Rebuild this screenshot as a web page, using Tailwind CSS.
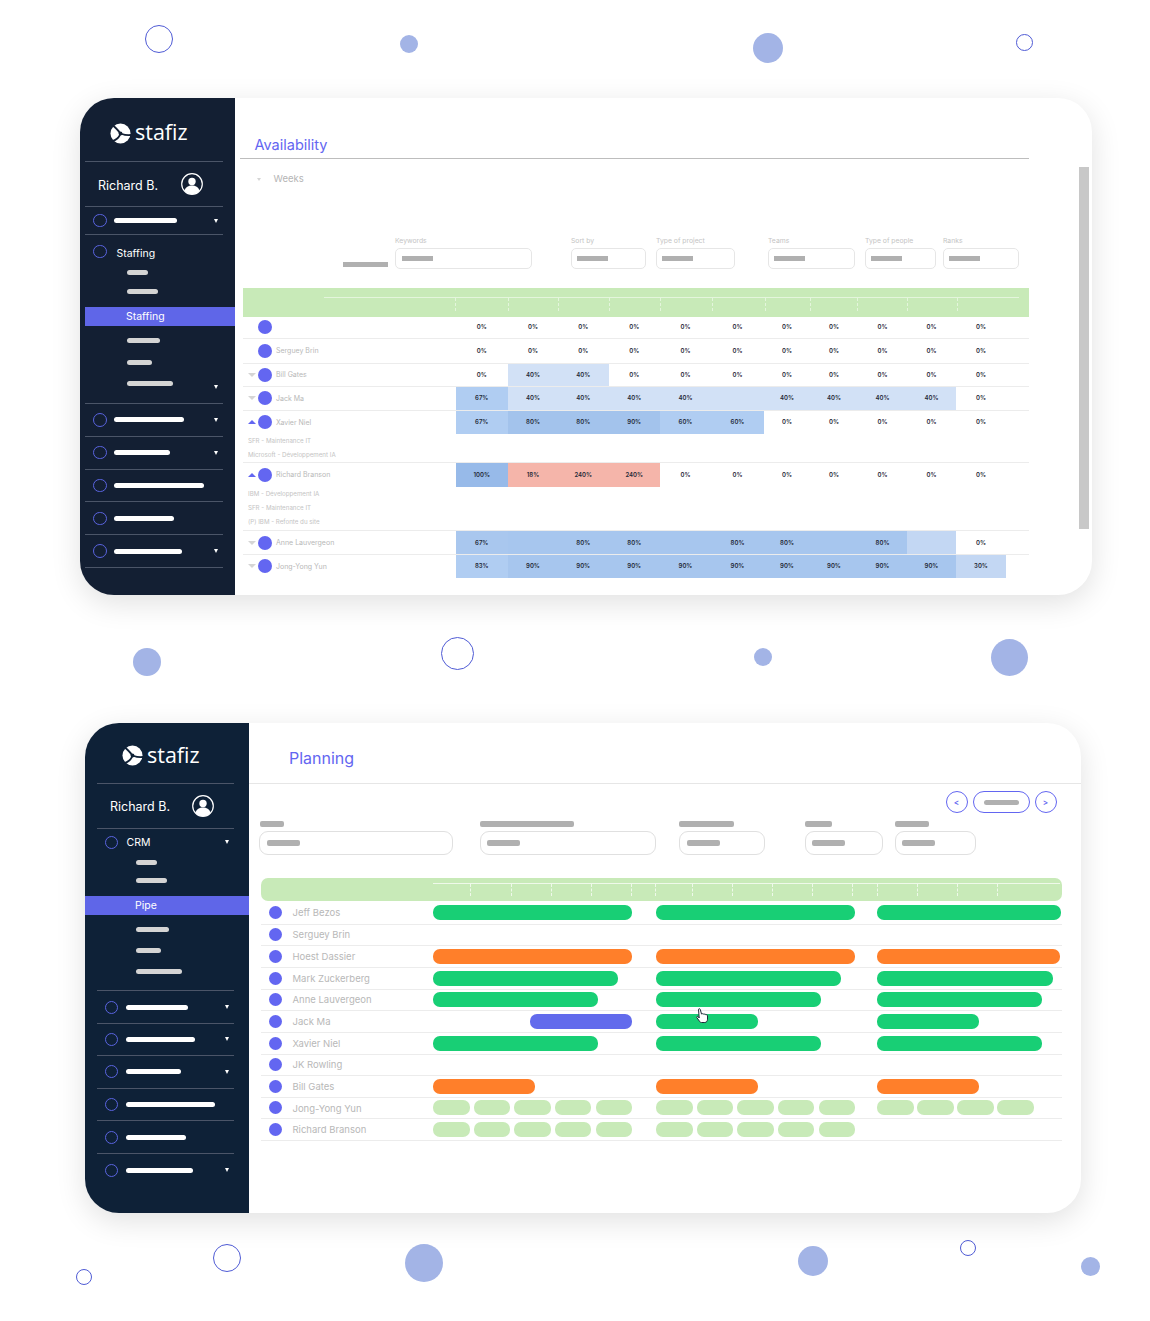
<!DOCTYPE html>
<html lang="en">
<head>
    <meta charset="UTF-8">
    <meta name="viewport" content="width=device-width, initial-scale=1.0">
    <title>Stafiz - Availability and Planning</title>
    <script src="https://cdn.jsdelivr.net/npm/@tailwindcss/browser@4"></script>
</head>
<body class="bg-white font-['Inter',sans-serif]">
<div class="relative w-[1150px] h-[1321px] overflow-hidden pt-[98px]">

    <!-- Decorative circles -->
    <div class="absolute left-[145px] top-[25px] w-[28px] h-[28px] rounded-full border border-[#4f5bd5]"></div>
    <div class="absolute left-[400px] top-[35px] w-[18px] h-[18px] rounded-full bg-[#a3b4e6]"></div>
    <div class="absolute left-[753px] top-[33px] w-[30px] h-[30px] rounded-full bg-[#a3b4e6]"></div>
    <div class="absolute left-[1016px] top-[34px] w-[17px] h-[17px] rounded-full border border-[#4f5bd5]"></div>
    <div class="absolute left-[133px] top-[648px] w-[28px] h-[28px] rounded-full bg-[#a3b4e6]"></div>
    <div class="absolute left-[441px] top-[637px] w-[33px] h-[33px] rounded-full border border-[#4f5bd5]"></div>
    <div class="absolute left-[754px] top-[648px] w-[18px] h-[18px] rounded-full bg-[#a3b4e6]"></div>
    <div class="absolute left-[991px] top-[639px] w-[37px] h-[37px] rounded-full bg-[#a3b4e6]"></div>
    <div class="absolute left-[213px] top-[1244px] w-[28px] h-[28px] rounded-full border border-[#4f5bd5]"></div>
    <div class="absolute left-[405px] top-[1244px] w-[38px] h-[38px] rounded-full bg-[#a3b4e6]"></div>
    <div class="absolute left-[798px] top-[1246px] w-[30px] h-[30px] rounded-full bg-[#a3b4e6]"></div>
    <div class="absolute left-[960px] top-[1240px] w-[16px] h-[16px] rounded-full border border-[#4f5bd5]"></div>
    <div class="absolute left-[76px] top-[1269px] w-[16px] h-[16px] rounded-full border border-[#4f5bd5]"></div>
    <div class="absolute left-[1081px] top-[1257px] w-[19px] h-[19px] rounded-full bg-[#a3b4e6]"></div>

    <!-- Availability card -->
    <div class="relative ml-[80px] w-[1012px] h-[497px] flex rounded-[34px] overflow-hidden bg-white shadow-[0_8px_30px_rgba(0,0,0,0.12)]">
        <aside class="w-[155px] shrink-0 pl-[5px] bg-[#131f33]">
            <div class="w-[138px] h-[64px] pl-[25px] pt-[24px] flex items-start gap-[4px] border-b border-[#4b5568]">
                <svg class="mt-[1px]" width="21" height="21" viewBox="0 0 22 22"><circle cx="11" cy="11" r="10.500" fill="#fff"/><g fill="none" stroke="#131f33" stroke-width="1.900"><path d="M3 2.500C6 5 8.500 7 10 10"/><path d="M22.500 12.500C18 13 15 12.500 12.500 11.500"/><path d="M2.500 19C6 18 9 15.500 10.500 12.500"/></g><circle cx="11" cy="11" r="2" fill="#131f33"/></svg>
                <span class="font-['Open_Sans',sans-serif] text-[21.500px] leading-[20px] text-white">stafiz</span>
            </div>
            <div class="w-[138px] h-[45px] pl-[13px] pr-[20px] flex items-center justify-between border-b border-[#4b5568]">
                <span class="mt-[4px] text-[12.500px] text-white">Richard B.</span>
                <svg class="mt-[-1px]" width="22" height="22" viewBox="0 0 22 22"><circle cx="11" cy="11" r="10.300" fill="none" stroke="#fff" stroke-width="1.200"/><circle cx="11" cy="8.500" r="3.700" fill="#fff"/><path d="M3.500 17.700c1-3.700 4-5.200 7.500-5.200s6.500 1.500 7.500 5.200a10 10 0 0 1-15 0z" fill="#fff"/></svg>
            </div>
            <div class="w-[138px] h-[28px] pl-[8px] flex items-center border-b border-[#4b5568]">
                <span class="w-[13.500px] h-[13.500px] rounded-full border-[1.500px] border-[#5a64e0]"></span>
                <span class="ml-[7.500px] w-[63px] h-[5px] rounded-full bg-white"></span>
                <span class="ml-auto mr-[5px] w-0 h-0 border-x-[2.500px] border-x-transparent border-t-[4px] border-t-white"></span>
            </div>
            <div class="w-[138px] h-[72px] pl-[8px] pt-[10px]">
                <div class="flex items-center h-[13px]">
                    <span class="w-[13.500px] h-[13.500px] rounded-full border-[1.500px] border-[#5a64e0]"></span>
                    <span class="ml-[10px] mt-[4px] text-[10.500px] text-white">Staffing</span>
                </div>
                <div class="mt-[11.500px] ml-[33.500px] w-[21px] h-[5px] rounded-full bg-[#d4d4d4]"></div>
                <div class="mt-[14px] ml-[33.500px] w-[31px] h-[5px] rounded-full bg-[#d4d4d4]"></div>
            </div>
            <div class="w-[150px] h-[19px] pl-[41px] flex items-center bg-[#5f66e8] text-[10.500px] text-white">Staffing</div>
            <div class="w-[138px] h-[78px] pl-[41.500px] pt-[11.500px] border-b border-[#4b5568]">
                <div class="w-[33px] h-[5px] rounded-full bg-[#d4d4d4]"></div>
                <div class="mt-[17px] w-[25px] h-[5px] rounded-full bg-[#d4d4d4]"></div>
                <div class="mt-[16px] flex items-start justify-between">
                    <span class="w-[46px] h-[5px] rounded-full bg-[#d4d4d4]"></span>
                    <span class="mr-[5px] mt-[4.500px] w-0 h-0 border-x-[2.500px] border-x-transparent border-t-[4px] border-t-white"></span>
                </div>
            </div>
            <div class="w-[138px] h-[32.800px] pl-[8px] flex items-center border-b border-[#4b5568]">
                <span class="w-[13.500px] h-[13.500px] rounded-full border-[1.500px] border-[#5a64e0]"></span>
                <span class="ml-[7.500px] w-[70px] h-[5px] rounded-full bg-white"></span>
                <span class="ml-auto mr-[5px] w-0 h-0 border-x-[2.500px] border-x-transparent border-t-[4px] border-t-white"></span>
            </div>
            <div class="w-[138px] h-[32.800px] pl-[8px] flex items-center border-b border-[#4b5568]">
                <span class="w-[13.500px] h-[13.500px] rounded-full border-[1.500px] border-[#5a64e0]"></span>
                <span class="ml-[7.500px] w-[56px] h-[5px] rounded-full bg-white"></span>
                <span class="ml-auto mr-[5px] w-0 h-0 border-x-[2.500px] border-x-transparent border-t-[4px] border-t-white"></span>
            </div>
            <div class="w-[138px] h-[32.800px] pl-[8px] flex items-center border-b border-[#4b5568]">
                <span class="w-[13.500px] h-[13.500px] rounded-full border-[1.500px] border-[#5a64e0]"></span>
                <span class="ml-[7.500px] w-[89.500px] h-[5px] rounded-full bg-white"></span>
            </div>
            <div class="w-[138px] h-[32.800px] pl-[8px] flex items-center border-b border-[#4b5568]">
                <span class="w-[13.500px] h-[13.500px] rounded-full border-[1.500px] border-[#5a64e0]"></span>
                <span class="ml-[7.500px] w-[60px] h-[5px] rounded-full bg-white"></span>
            </div>
            <div class="w-[138px] h-[32.800px] pl-[8px] flex items-center border-b border-[#4b5568]">
                <span class="w-[13.500px] h-[13.500px] rounded-full border-[1.500px] border-[#5a64e0]"></span>
                <span class="ml-[7.500px] w-[67.500px] h-[5px] rounded-full bg-white"></span>
                <span class="ml-auto mr-[5px] w-0 h-0 border-x-[2.500px] border-x-transparent border-t-[4px] border-t-white"></span>
            </div>
        </aside>

        <main class="relative flex-1">
            <div class="absolute right-[3px] top-[69px] w-[10px] h-[362px] bg-[#c8c8c8]"></div>
            <div class="ml-[5px] w-[789px] h-[61px] pl-[14.500px] pb-[4px] flex items-end border-b border-[#bdbdbd]">
                <h2 class="text-[14.500px] leading-[18px] text-[#6366f1]">Availability</h2>
            </div>
            <div class="mt-[14px] h-[12px] pl-[22px] flex items-center">
                <span class="w-0 h-0 border-x-[2.500px] border-x-transparent border-t-[3px] border-t-[#d5d5d5]"></span>
                <span class="ml-[12.500px] text-[9.500px] text-[#b5b5b5]">Weeks</span>
            </div>

            <!-- Filters -->
            <div class="mt-[49px] ml-[108px] flex items-end text-[6.800px] leading-[14px] text-[#c4c4c4]">
                <div class="mb-[2.500px] w-[45px] h-[5px] bg-[#b0b0b0]"></div>
                <div class="ml-[7px] w-[137px]">Keywords<div class="h-[21px] pl-[6px] flex items-center rounded-[5px] border border-[#e6e6e6]"><span class="w-[31px] h-[5px] bg-[#b0b0b0]"></span></div></div>
                <div class="ml-[39px] w-[75px]">Sort by<div class="h-[21px] pl-[5px] flex items-center rounded-[5px] border border-[#e6e6e6]"><span class="w-[31px] h-[5px] bg-[#b0b0b0]"></span></div></div>
                <div class="ml-[10px] w-[79px]">Type of project<div class="h-[21px] pl-[5px] flex items-center rounded-[5px] border border-[#e6e6e6]"><span class="w-[31px] h-[5px] bg-[#b0b0b0]"></span></div></div>
                <div class="ml-[33px] w-[87px]">Teams<div class="h-[21px] pl-[5px] flex items-center rounded-[5px] border border-[#e6e6e6]"><span class="w-[31px] h-[5px] bg-[#b0b0b0]"></span></div></div>
                <div class="ml-[10px] w-[70.500px]">Type of people<div class="h-[21px] pl-[5px] flex items-center rounded-[5px] border border-[#e6e6e6]"><span class="w-[31px] h-[5px] bg-[#b0b0b0]"></span></div></div>
                <div class="ml-[7.500px] w-[76px]">Ranks<div class="h-[21px] pl-[5px] flex items-center rounded-[5px] border border-[#e6e6e6]"><span class="w-[31px] h-[5px] bg-[#b0b0b0]"></span></div></div>
            </div>

            <!-- Availability table -->
            <div class="mt-[19px] ml-[8px] w-[786px] h-[29px] pl-[81px] pt-[9px] bg-[#c8eab8]">
                <div class="w-[695px] border-t border-white/50"></div>
                <div class="ml-[131px] flex h-[13px] *:border-l *:border-dashed *:border-white/50">
                    <div class="w-[53px]"></div><div class="w-[50px]"></div><div class="w-[50.500px]"></div><div class="w-[51px]"></div><div class="w-[52px]"></div><div class="w-[53px]"></div><div class="w-[45.500px]"></div><div class="w-[47px]"></div><div class="w-[50px]"></div><div class="w-[49.500px]"></div><div class="w-[1px]"></div>
                </div>
            </div>
            <table class="ml-[8px] w-[786px] table-fixed border-collapse text-center text-[6px] leading-none font-semibold text-[#1f2937]">
                <colgroup>
                    <col class="w-[212.500px]"><col class="w-[52.500px]"><col class="w-[50px]"><col class="w-[50.500px]"><col class="w-[51.500px]"><col class="w-[51px]"><col class="w-[53px]"><col class="w-[46px]"><col class="w-[48px]"><col class="w-[49px]"><col class="w-[49px]"><col class="w-[50px]"><col class="w-[23px]">
                </colgroup>
                <tbody>
                    <tr class="h-[21px] border-b border-[#ececec]">
                        <td class="pl-[15px]"><span class="block w-[14px] h-[14px] rounded-full bg-[#6366f1]"></span></td>
                        <td>0%</td><td>0%</td><td>0%</td><td>0%</td><td>0%</td><td>0%</td><td>0%</td><td>0%</td><td>0%</td><td>0%</td><td>0%</td><td></td>
                    </tr>
                    <tr class="h-[25px] border-b border-[#ececec]">
                        <td class="pl-[15px]"><div class="flex items-center text-left text-[7px] font-normal text-[#b8b8b8]"><span class="w-[14px] h-[14px] rounded-full bg-[#6366f1]"></span><span class="ml-[4px]">Serguey Brin</span></div></td>
                        <td>0%</td><td>0%</td><td>0%</td><td>0%</td><td>0%</td><td>0%</td><td>0%</td><td>0%</td><td>0%</td><td>0%</td><td>0%</td><td></td>
                    </tr>
                    <tr class="h-[23px] border-b border-[#ececec]">
                        <td class="pl-[5px]"><div class="flex items-center text-left text-[7px] font-normal text-[#b8b8b8]"><span class="w-0 h-0 border-x-[4px] border-x-transparent border-t-[4px] border-t-[#d5d5d5]"></span><span class="ml-[2px] w-[14px] h-[14px] rounded-full bg-[#6366f1]"></span><span class="ml-[4px]">Bill Gates</span></div></td>
                        <td>0%</td><td class="bg-[#d2e1f6]">40%</td><td class="bg-[#d2e1f6]">40%</td><td>0%</td><td>0%</td><td>0%</td><td>0%</td><td>0%</td><td>0%</td><td>0%</td><td>0%</td><td></td>
                    </tr>
                    <tr class="h-[24px] border-b border-[#ececec]">
                        <td class="pl-[5px]"><div class="flex items-center text-left text-[7px] font-normal text-[#b8b8b8]"><span class="w-0 h-0 border-x-[4px] border-x-transparent border-t-[4px] border-t-[#d5d5d5]"></span><span class="ml-[2px] w-[14px] h-[14px] rounded-full bg-[#6366f1]"></span><span class="ml-[4px]">Jack Ma</span></div></td>
                        <td class="bg-[#b0cdf2]">67%</td><td class="bg-[#d2e1f6]">40%</td><td class="bg-[#d2e1f6]">40%</td><td class="bg-[#d2e1f6]">40%</td><td class="bg-[#d2e1f6]">40%</td><td class="bg-[#d2e1f6]"></td><td class="bg-[#d2e1f6]">40%</td><td class="bg-[#d2e1f6]">40%</td><td class="bg-[#d2e1f6]">40%</td><td class="bg-[#d2e1f6]">40%</td><td>0%</td><td></td>
                    </tr>
                    <tr class="h-[24px]">
                        <td class="pl-[5px]"><div class="flex items-center text-left text-[7px] font-normal text-[#b8b8b8]"><span class="w-0 h-0 border-x-[4px] border-x-transparent border-b-[4px] border-b-[#6366f1]"></span><span class="ml-[2px] w-[14px] h-[14px] rounded-full bg-[#6366f1]"></span><span class="ml-[4px]">Xavier Niel</span></div></td>
                        <td class="bg-[#b0cdf2]">67%</td><td class="bg-[#a3c3ec]">80%</td><td class="bg-[#a3c3ec]">80%</td><td class="bg-[#a3c3ec]">90%</td><td class="bg-[#b0cdf2]">60%</td><td class="bg-[#b0cdf2]">60%</td><td>0%</td><td>0%</td><td>0%</td><td>0%</td><td>0%</td><td></td>
                    </tr>
                    <tr class="h-[28px] border-b border-[#ececec]">
                        <td colspan="13" class="pl-[5px] text-left text-[6.200px] leading-[14px] font-normal text-[#c4c4c4]">SFR - Maintenance IT<br>Microsoft - Développement IA</td>
                    </tr>
                    <tr class="h-[24px]">
                        <td class="pl-[5px]"><div class="flex items-center text-left text-[7px] font-normal text-[#b8b8b8]"><span class="w-0 h-0 border-x-[4px] border-x-transparent border-b-[4px] border-b-[#6366f1]"></span><span class="ml-[2px] w-[14px] h-[14px] rounded-full bg-[#6366f1]"></span><span class="ml-[4px]">Richard Branson</span></div></td>
                        <td class="bg-[#97bae9]">100%</td><td class="bg-[#f5b5aa]">18%</td><td class="bg-[#f5b5aa]">240%</td><td class="bg-[#f5b5aa]">240%</td><td>0%</td><td>0%</td><td>0%</td><td>0%</td><td>0%</td><td>0%</td><td>0%</td><td></td>
                    </tr>
                    <tr class="h-[44px] border-b border-[#ececec]">
                        <td colspan="13" class="pl-[5px] text-left text-[6.200px] leading-[14px] font-normal text-[#c4c4c4]">IBM - Développement IA<br>SFR - Maintenance IT<br>(P) IBM - Refonte du site</td>
                    </tr>
                    <tr class="h-[24px] border-b border-[#ececec]">
                        <td class="pl-[5px]"><div class="flex items-center text-left text-[7px] font-normal text-[#b8b8b8]"><span class="w-0 h-0 border-x-[4px] border-x-transparent border-t-[4px] border-t-[#d5d5d5]"></span><span class="ml-[2px] w-[14px] h-[14px] rounded-full bg-[#6366f1]"></span><span class="ml-[4px]">Anne Lauvergeon</span></div></td>
                        <td class="bg-[#a9c7ee]">67%</td><td class="bg-[#a7c6ee]"></td><td class="bg-[#a7c6ee]">80%</td><td class="bg-[#a7c6ee]">80%</td><td class="bg-[#a7c6ee]"></td><td class="bg-[#a7c6ee]">80%</td><td class="bg-[#a7c6ee]">80%</td><td class="bg-[#a7c6ee]"></td><td class="bg-[#a7c6ee]">80%</td><td class="bg-[#c3d7f3]"></td><td>0%</td><td></td>
                    </tr>
                    <tr class="h-[23px]">
                        <td class="pl-[5px]"><div class="flex items-center text-left text-[7px] font-normal text-[#b8b8b8]"><span class="w-0 h-0 border-x-[4px] border-x-transparent border-t-[4px] border-t-[#d5d5d5]"></span><span class="ml-[2px] w-[14px] h-[14px] rounded-full bg-[#6366f1]"></span><span class="ml-[4px]">Jong-Yong Yun</span></div></td>
                        <td class="bg-[#b0cdf2]">83%</td><td class="bg-[#a7c6ee]">90%</td><td class="bg-[#a7c6ee]">90%</td><td class="bg-[#a7c6ee]">90%</td><td class="bg-[#a7c6ee]">90%</td><td class="bg-[#a7c6ee]">90%</td><td class="bg-[#a7c6ee]">90%</td><td class="bg-[#a7c6ee]">90%</td><td class="bg-[#a7c6ee]">90%</td><td class="bg-[#a7c6ee]">90%</td><td class="bg-[#c3d7f3]">30%</td><td></td>
                    </tr>
                </tbody>
            </table>
        </main>
    </div>

    <!-- Planning card -->
    <div class="relative mt-[128px] ml-[85px] w-[996px] h-[490px] flex rounded-[34px] overflow-hidden bg-white shadow-[0_8px_30px_rgba(0,0,0,0.12)]">
        <aside class="w-[164px] shrink-0 pl-[12px] bg-[#0e2137]">
            <div class="w-[137px] h-[61px] pl-[25px] pt-[22px] flex items-start gap-[4px] border-b border-[#4b5568]">
                <svg width="21" height="21" viewBox="0 0 22 22"><circle cx="11" cy="11" r="10.500" fill="#fff"/><g fill="none" stroke="#0e2137" stroke-width="1.900"><path d="M3 2.500C6 5 8.500 7 10 10"/><path d="M22.500 12.500C18 13 15 12.500 12.500 11.500"/><path d="M2.500 19C6 18 9 15.500 10.500 12.500"/></g><circle cx="11" cy="11" r="2" fill="#0e2137"/></svg>
                <span class="font-['Open_Sans',sans-serif] text-[21.500px] leading-[20px] text-white">stafiz</span>
            </div>
            <div class="w-[137px] h-[45px] pl-[13px] pr-[20px] flex items-center justify-between border-b border-[#4b5568]">
                <span class="mt-[3px] text-[12.500px] text-white">Richard B.</span>
                <svg class="-mt-[1px]" width="22" height="22" viewBox="0 0 22 22"><circle cx="11" cy="11" r="10.300" fill="none" stroke="#fff" stroke-width="1.200"/><circle cx="11" cy="8.500" r="3.700" fill="#fff"/><path d="M3.500 17.700c1-3.700 4-5.200 7.500-5.200s6.500 1.500 7.500 5.200a10 10 0 0 1-15 0z" fill="#fff"/></svg>
            </div>
            <div class="w-[137px] h-[67px] pl-[8px] pt-[6.500px]">
                <div class="flex items-center h-[13px]">
                    <span class="w-[13px] h-[13px] rounded-full border-[1.500px] border-[#5a64e0]"></span>
                    <span class="ml-[8.500px] mt-[1px] text-[10.500px] text-white">CRM</span>
                    <span class="ml-auto mr-[5px] w-0 h-0 border-x-[2.500px] border-x-transparent border-t-[4px] border-t-white"></span>
                </div>
                <div class="mt-[11px] ml-[30.500px] w-[21.500px] h-[5px] rounded-full bg-[#d4d4d4]"></div>
                <div class="mt-[13.500px] ml-[30.500px] w-[31.500px] h-[5px] rounded-full bg-[#d4d4d4]"></div>
            </div>
            <div class="-ml-[12px] w-[164px] h-[18.500px] pl-[50px] pt-[1px] flex items-center bg-[#5f66e8] text-[10.500px] text-white">Pipe</div>
            <div class="w-[137px] h-[76.500px] pl-[38.500px] pt-[12px] border-b border-[#4b5568]">
                <div class="w-[33.500px] h-[5px] rounded-full bg-[#d4d4d4]"></div>
                <div class="mt-[16px] w-[25.500px] h-[5px] rounded-full bg-[#d4d4d4]"></div>
                <div class="mt-[16.500px] w-[46.500px] h-[5px] rounded-full bg-[#d4d4d4]"></div>
            </div>
            <div class="w-[137px] h-[32.600px] pl-[8px] pt-[1px] flex items-center border-b border-[#4b5568]">
                <span class="w-[13px] h-[13px] rounded-full border-[1.500px] border-[#5a64e0]"></span>
                <span class="ml-[8px] w-[62px] h-[5px] rounded-full bg-white"></span>
                <span class="ml-auto mr-[5px] w-0 h-0 border-x-[2.500px] border-x-transparent border-t-[4px] border-t-white"></span>
            </div>
            <div class="w-[137px] h-[32.600px] pl-[8px] flex items-center border-b border-[#4b5568]">
                <span class="w-[13px] h-[13px] rounded-full border-[1.500px] border-[#5a64e0]"></span>
                <span class="ml-[8px] w-[69px] h-[5px] rounded-full bg-white"></span>
                <span class="ml-auto mr-[5px] w-0 h-0 border-x-[2.500px] border-x-transparent border-t-[4px] border-t-white"></span>
            </div>
            <div class="w-[137px] h-[32.600px] pl-[8px] flex items-center border-b border-[#4b5568]">
                <span class="w-[13px] h-[13px] rounded-full border-[1.500px] border-[#5a64e0]"></span>
                <span class="ml-[8px] w-[55px] h-[5px] rounded-full bg-white"></span>
                <span class="ml-auto mr-[5px] w-0 h-0 border-x-[2.500px] border-x-transparent border-t-[4px] border-t-white"></span>
            </div>
            <div class="w-[137px] h-[32.600px] pl-[8px] flex items-center border-b border-[#4b5568]">
                <span class="w-[13px] h-[13px] rounded-full border-[1.500px] border-[#5a64e0]"></span>
                <span class="ml-[8px] w-[89px] h-[5px] rounded-full bg-white"></span>
            </div>
            <div class="w-[137px] h-[32.600px] pl-[8px] flex items-center border-b border-[#4b5568]">
                <span class="w-[13px] h-[13px] rounded-full border-[1.500px] border-[#5a64e0]"></span>
                <span class="ml-[8px] w-[60px] h-[5px] rounded-full bg-white"></span>
            </div>
            <div class="w-[137px] h-[32.600px] pl-[8px] flex items-center">
                <span class="w-[13px] h-[13px] rounded-full border-[1.500px] border-[#5a64e0]"></span>
                <span class="ml-[8px] w-[67px] h-[5px] rounded-full bg-white"></span>
                <span class="ml-auto mr-[5px] w-0 h-0 border-x-[2.500px] border-x-transparent border-t-[4px] border-t-white"></span>
            </div>
        </aside>

        <main class="flex-1">
            <div class="h-[61px] pl-[40px] pt-[10px] flex items-center border-b border-[#e6e6e6]">
                <h2 class="text-[16px] text-[#6366f1]">Planning</h2>
            </div>
            <div class="pt-[7px] pr-[24.500px] flex justify-end items-center gap-[5px]">
                <button class="w-[22px] h-[22px] flex items-center justify-center rounded-full border border-[#6366f1] text-[8px] leading-none font-semibold text-[#6366f1]">&lt;</button>
                <button class="w-[57px] h-[22px] flex items-center justify-center rounded-full border border-[#6366f1]"><span class="w-[35px] h-[5px] rounded-full bg-[#b0b0b0]"></span></button>
                <button class="w-[22px] h-[22px] flex items-center justify-center rounded-full border border-[#6366f1] text-[8px] leading-none font-semibold text-[#6366f1]">&gt;</button>
            </div>

            <!-- Filters -->
            <div class="mt-[8px] ml-[10px] flex">
                <div class="w-[194px]"><div class="ml-[1px] w-[24px] h-[6px] rounded-[2px] bg-[#b0b0b0]"></div><div class="mt-[3.500px] h-[24px] pl-[7px] flex items-center rounded-[9px] border border-[#e0e0e0]"><span class="w-[33px] h-[6px] rounded-[2px] bg-[#b0b0b0]"></span></div></div>
                <div class="ml-[26.500px] w-[176px]"><div class="w-[94px] h-[6px] rounded-[2px] bg-[#b0b0b0]"></div><div class="mt-[3.500px] h-[24px] pl-[6.500px] flex items-center rounded-[9px] border border-[#e0e0e0]"><span class="w-[33px] h-[6px] rounded-[2px] bg-[#b0b0b0]"></span></div></div>
                <div class="ml-[23.500px] w-[86px]"><div class="w-[55px] h-[6px] rounded-[2px] bg-[#b0b0b0]"></div><div class="mt-[3.500px] h-[24px] pl-[6.500px] flex items-center rounded-[9px] border border-[#e0e0e0]"><span class="w-[33px] h-[6px] rounded-[2px] bg-[#b0b0b0]"></span></div></div>
                <div class="ml-[39.500px] w-[78.500px]"><div class="w-[27px] h-[6px] rounded-[2px] bg-[#b0b0b0]"></div><div class="mt-[3.500px] h-[24px] pl-[6px] flex items-center rounded-[9px] border border-[#e0e0e0]"><span class="w-[33px] h-[6px] rounded-[2px] bg-[#b0b0b0]"></span></div></div>
                <div class="ml-[12px] w-[81px]"><div class="w-[34px] h-[6px] rounded-[2px] bg-[#b0b0b0]"></div><div class="mt-[3.500px] h-[24px] pl-[6px] flex items-center rounded-[9px] border border-[#e0e0e0]"><span class="w-[33px] h-[6px] rounded-[2px] bg-[#b0b0b0]"></span></div></div>
            </div>

            <!-- Planning table -->
            <div class="mt-[23px] ml-[12px] w-[801px] h-[23px] pl-[172px] pt-[5px] rounded-[7px] bg-[#c8eab8]">
                <div class="w-[627px] border-t border-white/70"></div>
                <div class="flex h-[12px] *:border-l *:border-dashed *:border-white/70">
                    <div class="ml-[37px] w-[40.500px]"></div><div class="w-[40.500px]"></div><div class="w-[40px]"></div><div class="w-[40px]"></div><div class="w-[24px]"></div><div class="w-[36.500px]"></div><div class="w-[40px]"></div><div class="w-[40px]"></div><div class="w-[40px]"></div><div class="w-[40.500px]"></div><div class="w-[24.500px]"></div><div class="w-[40px]"></div><div class="w-[40px]"></div><div class="w-[40px]"></div><div class="w-[40px]"></div>
                </div>
            </div>
            <div class="ml-[12px] w-[801px] text-[9.500px] text-[#b8b8b8]">
                <div class="h-[24px] grid grid-cols-[172px_223px_221px_184px] items-center border-b border-[#ececec]">
                    <div class="pl-[8px] flex items-center"><span class="w-[13px] h-[13px] rounded-full bg-[#6366f1]"></span><span class="ml-[10.500px] mt-[2px]">Jeff Bezos</span></div>
                    <div class="w-[199px] h-[15px] rounded-[7px] bg-[#18cf75]"></div>
                    <div class="w-[199px] h-[15px] rounded-[7px] bg-[#18cf75]"></div>
                    <div class="w-[184px] h-[15px] rounded-[7px] bg-[#18cf75]"></div>
                </div>
                <div class="h-[21px] grid grid-cols-[172px_223px_221px_184px] items-center border-b border-[#ececec]">
                    <div class="pl-[8px] flex items-center"><span class="w-[13px] h-[13px] rounded-full bg-[#6366f1]"></span><span class="ml-[10.500px] mt-[2px]">Serguey Brin</span></div>
                </div>
                <div class="h-[22px] grid grid-cols-[172px_223px_221px_184px] items-center border-b border-[#ececec]">
                    <div class="pl-[8px] flex items-center"><span class="w-[13px] h-[13px] rounded-full bg-[#6366f1]"></span><span class="ml-[10.500px] mt-[2px]">Hoest Dassier</span></div>
                    <div class="w-[199px] h-[15px] rounded-[7px] bg-[#ff7f2a]"></div>
                    <div class="w-[199px] h-[15px] rounded-[7px] bg-[#ff7f2a]"></div>
                    <div class="w-[183px] h-[15px] rounded-[7px] bg-[#ff7f2a]"></div>
                </div>
                <div class="h-[22px] grid grid-cols-[172px_223px_221px_184px] items-center border-b border-[#ececec]">
                    <div class="pl-[8px] flex items-center"><span class="w-[13px] h-[13px] rounded-full bg-[#6366f1]"></span><span class="ml-[10.500px] mt-[2px]">Mark Zuckerberg</span></div>
                    <div class="w-[185px] h-[15px] rounded-[7px] bg-[#18cf75]"></div>
                    <div class="w-[185px] h-[15px] rounded-[7px] bg-[#18cf75]"></div>
                    <div class="w-[176px] h-[15px] rounded-[7px] bg-[#18cf75]"></div>
                </div>
                <div class="h-[21px] grid grid-cols-[172px_223px_221px_184px] items-center border-b border-[#ececec]">
                    <div class="pl-[8px] flex items-center"><span class="w-[13px] h-[13px] rounded-full bg-[#6366f1]"></span><span class="ml-[10.500px] mt-[2px]">Anne Lauvergeon</span></div>
                    <div class="w-[165px] h-[15px] rounded-[7px] bg-[#18cf75]"></div>
                    <div class="w-[165px] h-[15px] rounded-[7px] bg-[#18cf75]"></div>
                    <div class="w-[165px] h-[15px] rounded-[7px] bg-[#18cf75]"></div>
                </div>
                <div class="h-[22px] grid grid-cols-[172px_223px_221px_184px] items-center border-b border-[#ececec]">
                    <div class="pl-[8px] flex items-center"><span class="w-[13px] h-[13px] rounded-full bg-[#6366f1]"></span><span class="ml-[10.500px] mt-[2px]">Jack Ma</span></div>
                    <div class="ml-[97px] w-[102px] h-[15px] rounded-[7px] bg-[#626bec]"></div>
                    <div class="w-[102px] h-[15px] rounded-[7px] bg-[#18cf75]"></div>
                    <div class="w-[102px] h-[15px] rounded-[7px] bg-[#18cf75]"></div>
                </div>
                <div class="h-[22px] grid grid-cols-[172px_223px_221px_184px] items-center border-b border-[#ececec]">
                    <div class="pl-[8px] flex items-center"><span class="w-[13px] h-[13px] rounded-full bg-[#6366f1]"></span><span class="ml-[10.500px] mt-[2px]">Xavier Niel</span></div>
                    <div class="w-[165px] h-[15px] rounded-[7px] bg-[#18cf75]"></div>
                    <div class="w-[165px] h-[15px] rounded-[7px] bg-[#18cf75]"></div>
                    <div class="w-[165px] h-[15px] rounded-[7px] bg-[#18cf75]"></div>
                </div>
                <div class="h-[21px] grid grid-cols-[172px_223px_221px_184px] items-center border-b border-[#ececec]">
                    <div class="pl-[8px] flex items-center"><span class="w-[13px] h-[13px] rounded-full bg-[#6366f1]"></span><span class="ml-[10.500px] mt-[2px]">JK Rowling</span></div>
                </div>
                <div class="h-[22px] grid grid-cols-[172px_223px_221px_184px] items-center border-b border-[#ececec]">
                    <div class="pl-[8px] flex items-center"><span class="w-[13px] h-[13px] rounded-full bg-[#6366f1]"></span><span class="ml-[10.500px] mt-[2px]">Bill Gates</span></div>
                    <div class="w-[102px] h-[15px] rounded-[7px] bg-[#ff7f2a]"></div>
                    <div class="w-[102px] h-[15px] rounded-[7px] bg-[#ff7f2a]"></div>
                    <div class="w-[102px] h-[15px] rounded-[7px] bg-[#ff7f2a]"></div>
                </div>
                <div class="h-[21.500px] grid grid-cols-[172px_223px_221px_184px] items-center border-b border-[#ececec]">
                    <div class="pl-[8px] flex items-center"><span class="w-[13px] h-[13px] rounded-full bg-[#6366f1]"></span><span class="ml-[10.500px] mt-[2px]">Jong-Yong Yun</span></div>
                    <div class="flex w-[199px] justify-between *:w-[36.500px] *:h-[15px] *:rounded-[7px] *:bg-[#c8eab8]"><span></span><span></span><span></span><span></span><span></span></div>
                    <div class="flex w-[199px] justify-between *:w-[36.500px] *:h-[15px] *:rounded-[7px] *:bg-[#c8eab8]"><span></span><span></span><span></span><span></span><span></span></div>
                    <div class="flex w-[157px] justify-between *:w-[36.500px] *:h-[15px] *:rounded-[7px] *:bg-[#c8eab8]"><span></span><span></span><span></span><span></span></div>
                </div>
                <div class="h-[22px] grid grid-cols-[172px_223px_221px_184px] items-center border-b border-[#ececec]">
                    <div class="pl-[8px] flex items-center"><span class="w-[13px] h-[13px] rounded-full bg-[#6366f1]"></span><span class="ml-[10.500px] mt-[2px]">Richard Branson</span></div>
                    <div class="flex w-[199px] justify-between *:w-[36.500px] *:h-[15px] *:rounded-[7px] *:bg-[#c8eab8]"><span></span><span></span><span></span><span></span><span></span></div>
                    <div class="flex w-[199px] justify-between *:w-[36.500px] *:h-[15px] *:rounded-[7px] *:bg-[#c8eab8]"><span></span><span></span><span></span><span></span><span></span></div>
                </div>
            </div>
        </main>

        <!-- Hand cursor over the Jack Ma bar -->
        <svg class="absolute left-[611px] top-[285px]" width="12" height="16" viewBox="0 0 12 16"><path d="M2.500 1.500c0-1 1.700-1 1.800 0L5.500 6l1-.3c.7-.2 1.100.1 1.200.6l.9-.2c.7-.1 1.100.2 1.200.7l.7-.1c.7 0 1 .4 1 1v3.500c0 1.700-1 3.300-2.700 3.300H5.500c-1 0-1.700-.6-2.200-1.500L.8 9.500c-.4-.8.5-1.500 1.200-.9L3.200 10z" fill="#fff" stroke="#1f2937" stroke-width="1"/></svg>
    </div>
</div>
</body>
</html>
